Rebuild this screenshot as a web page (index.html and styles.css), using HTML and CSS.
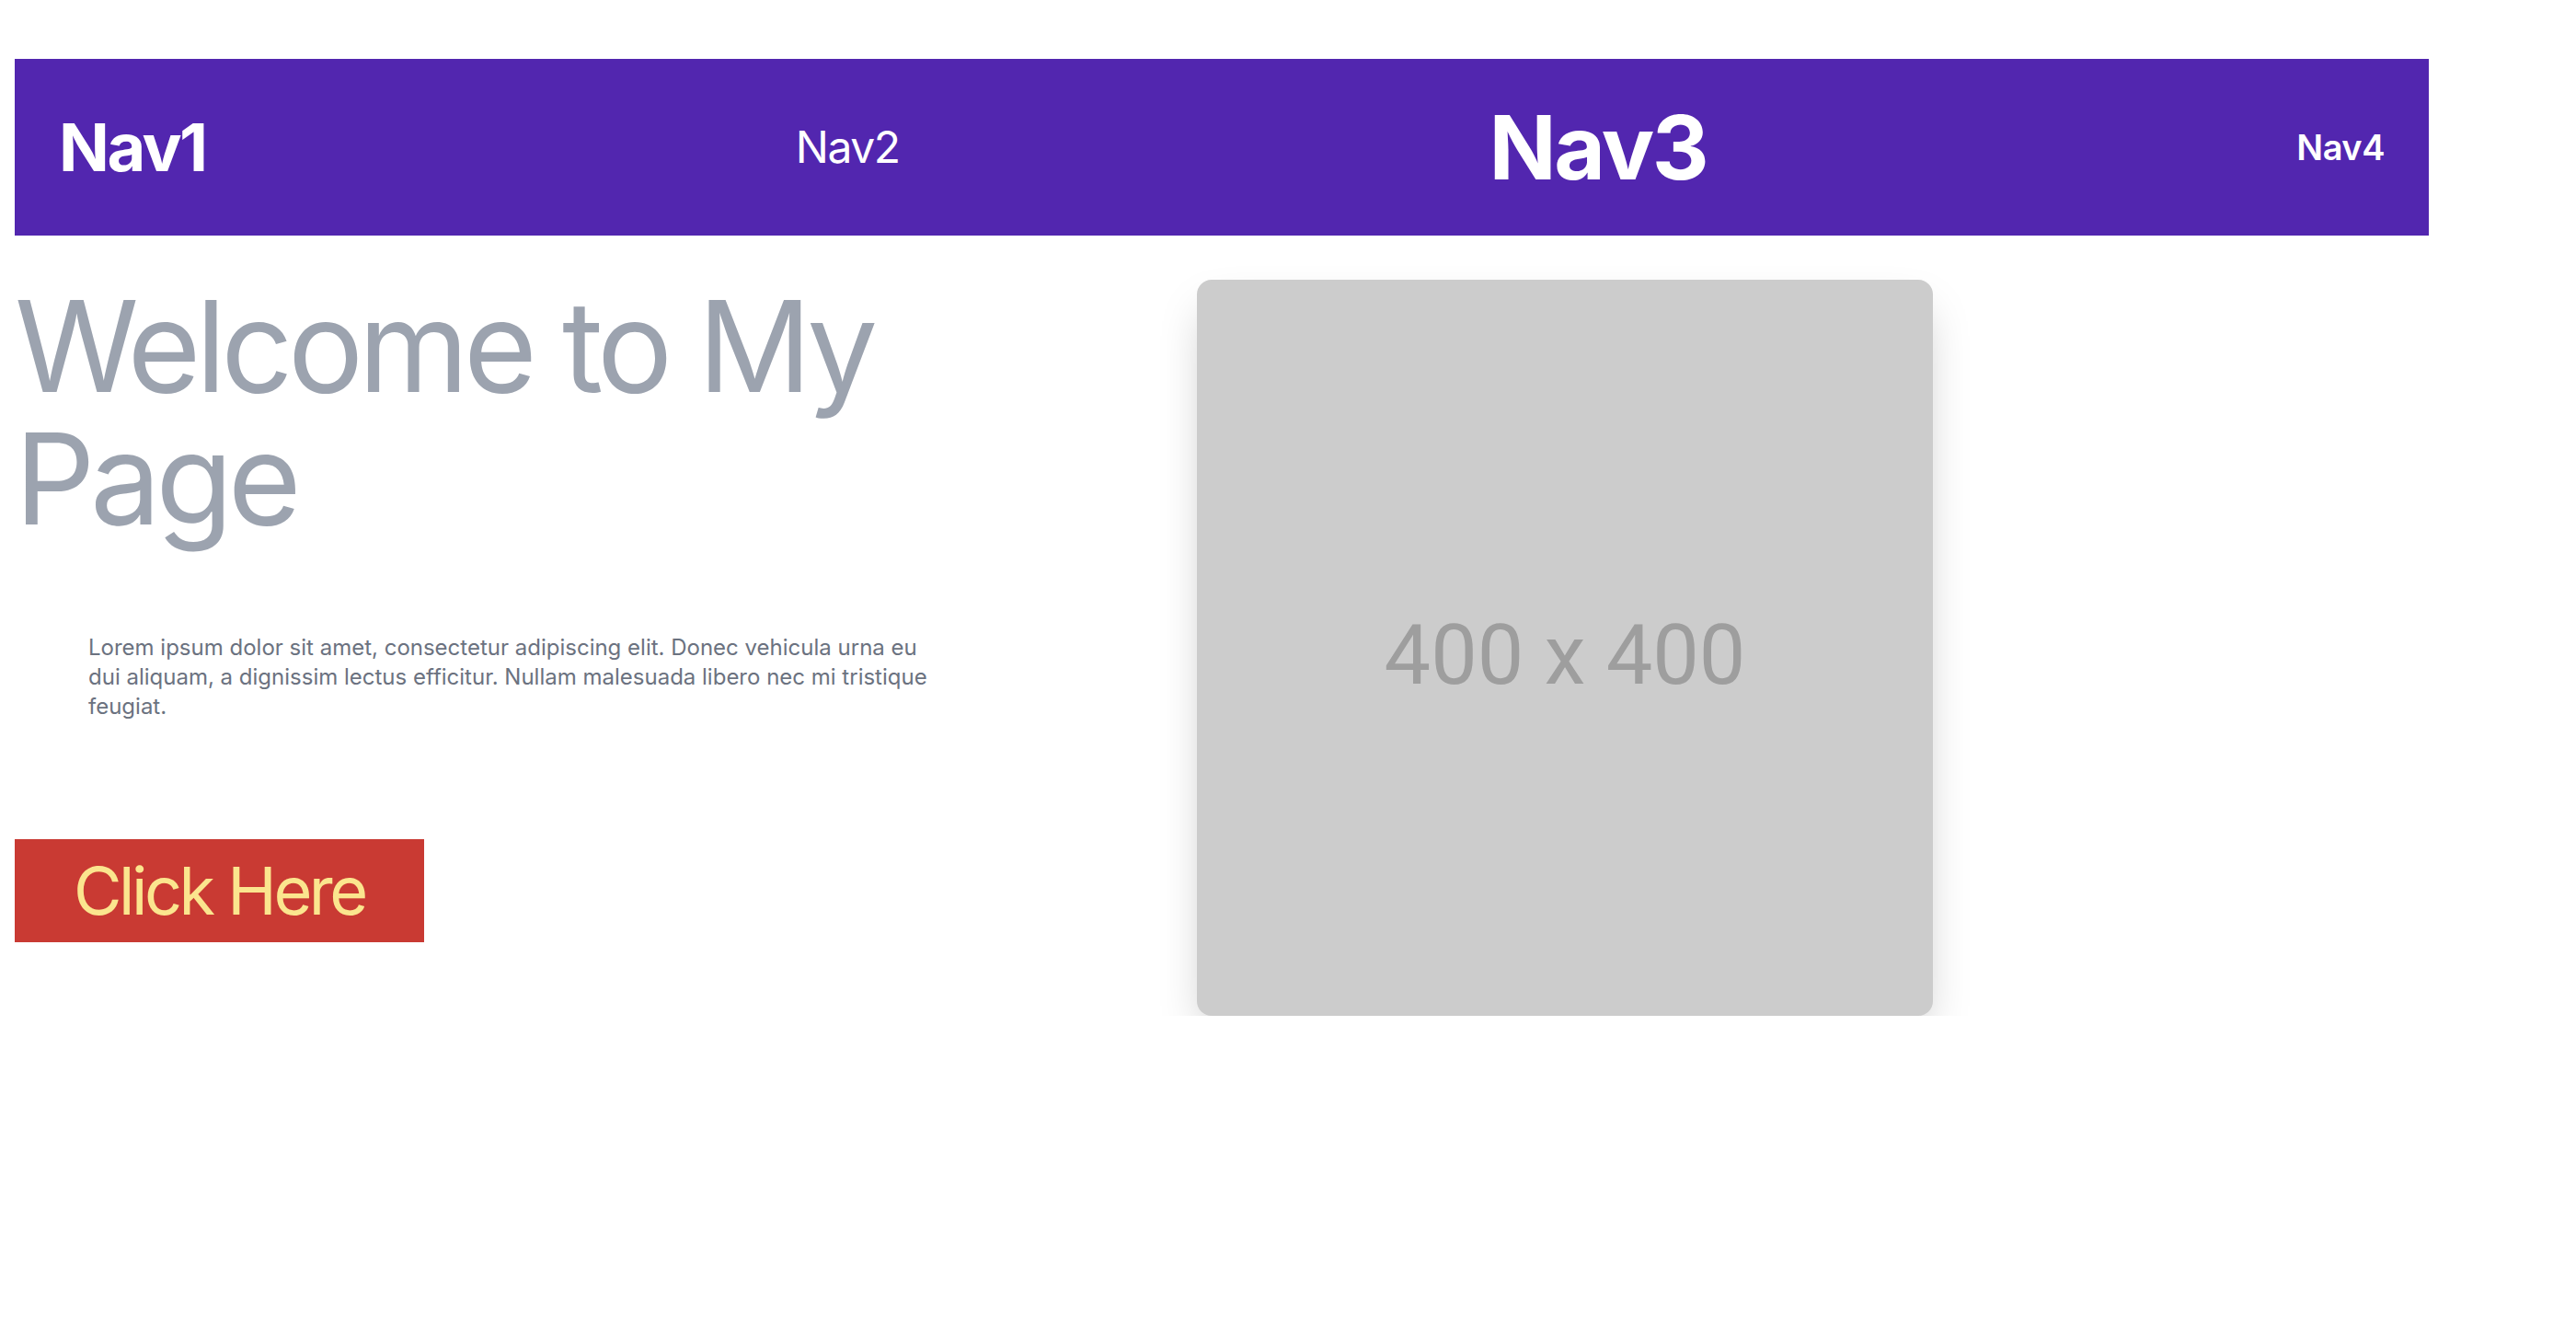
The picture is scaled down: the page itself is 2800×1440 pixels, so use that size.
FILE: index.html
```html
<!DOCTYPE html>
<html lang="en">
<head>
<meta charset="utf-8">
<title>My Page</title>
<link rel="stylesheet" href="styles.css">
</head>
<body>
<div class="page">
  <nav class="nav">
    <a class="nav-item nav1" href="#">Nav1</a>
    <a class="nav-item nav2" href="#">Nav2</a>
    <a class="nav-item nav3" href="#">Nav3</a>
    <a class="nav-item nav4" href="#">Nav4</a>
  </nav>
  <main class="hero">
    <section class="intro">
      <h1 class="title">Welcome to My Page</h1>
      <p class="lead">Lorem ipsum dolor sit amet, consectetur adipiscing elit. Donec vehicula urna eu dui aliquam, a dignissim lectus efficitur. Nullam malesuada libero nec mi tristique feugiat.</p>
      <button class="cta" type="button">Click Here</button>
    </section>
    <div class="card"><span class="card-label">400 x 400</span></div>
  </main>
</div>
</body>
</html>
```
FILE: styles.css
```css
* {
  box-sizing: border-box;
}

html, body {
  margin: 0;
  padding: 0;
  background: #ffffff;
}

body {
  font-family: Inter, "Noto Sans", "Liberation Sans", sans-serif;
}

.page {
  width: 2640px;
  padding: 64px 0 0 16px;
}

.nav {
  display: flex;
  justify-content: space-between;
  align-items: center;
  height: 192px;
  padding: 0 48px;
  background: #5226af;
}

.nav-item {
  color: #ffffff;
  text-decoration: none;
  line-height: 1;
}

.nav1 {
  font-size: 72px;
  font-weight: 700;
  letter-spacing: -2.5px;
}

.nav2 {
  font-size: 48px;
  font-weight: 400;
  letter-spacing: -1.5px;
}

.nav3 {
  font-size: 96px;
  font-weight: 700;
  letter-spacing: -2.5px;
}

.nav4 {
  font-size: 38px;
  font-weight: 600;
  letter-spacing: -0.5px;
}

.hero {
  display: flex;
  align-items: flex-start;
  margin-top: 48px;
}

.intro {
  width: 1100px;
  display: flex;
  flex-direction: column;
  align-items: flex-start;
}

.title {
  margin: 0;
  font-size: 137px;
  line-height: 144px;
  font-weight: 400;
  letter-spacing: -5.6px;
  color: #9ca3af;
}

.lead {
  margin: 96px 0 0 80px;
  width: 930px;
  font-size: 24px;
  line-height: 32px;
  color: #6b7280;
}

.cta {
  margin-top: 128px;
  padding: 20px 64px;
  border: 0;
  border-radius: 0;
  background: #c93a33;
  color: #fbe58e;
  font-family: inherit;
  font-size: 72px;
  line-height: 1;
  font-weight: 400;
  letter-spacing: -3.5px;
  cursor: pointer;
}

.card {
  margin-left: 185px;
  width: 800px;
  height: 800px;
  border-radius: 16px;
  background: #cccccc;
  box-shadow: 0 25px 50px -12px rgba(0, 0, 0, 0.25);
  display: flex;
  align-items: center;
  justify-content: center;
  padding-top: 16px;
}

.card-label {
  font-family: Roboto, "Liberation Sans", sans-serif;
  font-size: 90px;
  color: #9e9e9e;
}
```
